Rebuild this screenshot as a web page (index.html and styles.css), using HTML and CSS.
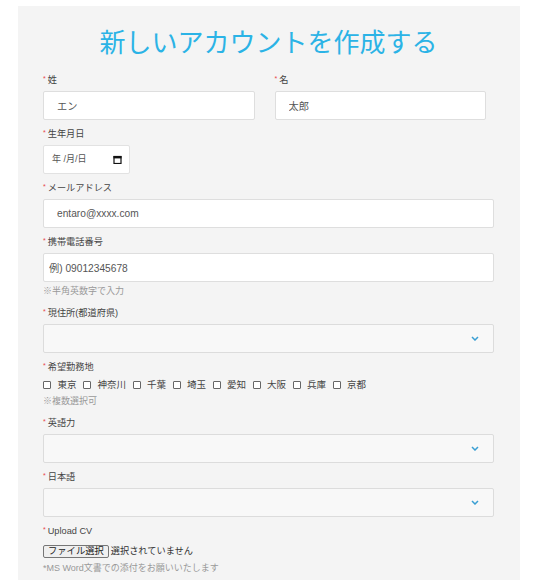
FILE: index.html
```html
<!DOCTYPE html>
<html lang="ja">
<head>
<meta charset="utf-8">
<title>新しいアカウントを作成する</title>
<link rel="stylesheet" href="styles.css">
</head>
<body>
<div class="panel">
  <h1 class="title">新しいアカウントを作成する</h1>

  <div class="name-row">
    <div class="field">
      <label class="label"><span class="req">*</span>姓</label>
      <input class="input" type="text" value="エン">
    </div>
    <div class="field">
      <label class="label"><span class="req">*</span>名</label>
      <input class="input" type="text" value="太郎">
    </div>
  </div>

  <div class="field">
    <label class="label"><span class="req">*</span>生年月日</label>
    <div class="date">
      <span class="date-text">年 /月/日</span>
      <svg class="cal" width="9" height="9" viewBox="0 0 9 9"><rect x="1" y="1.5" width="7" height="7" fill="none" stroke="#111" stroke-width="1.2"/><rect x="0.5" y="1" width="8" height="2.4" fill="#111"/></svg>
    </div>
  </div>

  <div class="field">
    <label class="label"><span class="req">*</span>メールアドレス</label>
    <input class="input" type="text" value="entaro@xxxx.com">
  </div>

  <div class="field field-noted">
    <label class="label"><span class="req">*</span>携帯電話番号</label>
    <input class="input input-tight" type="text" value="例) 09012345678">
    <div class="note note-phone">※半角英数字で入力</div>
  </div>

  <div class="field">
    <label class="label"><span class="req">*</span>現住所(都道府県)</label>
    <div class="select-wrap">
      <select class="select"><option></option></select>
      <svg class="chev" width="8" height="5" viewBox="0 0 8 5"><path d="M1 1 L4 4 L7 1" fill="none" stroke="#3a9fd3" stroke-width="1.5"/></svg>
    </div>
  </div>

  <div class="field field-noted">
    <label class="label"><span class="req">*</span>希望勤務地</label>
    <div class="checks">
      <label class="check"><input type="checkbox" class="box">東京</label>
      <label class="check"><input type="checkbox" class="box">神奈川</label>
      <label class="check"><input type="checkbox" class="box">千葉</label>
      <label class="check"><input type="checkbox" class="box">埼玉</label>
      <label class="check"><input type="checkbox" class="box">愛知</label>
      <label class="check"><input type="checkbox" class="box">大阪</label>
      <label class="check"><input type="checkbox" class="box">兵庫</label>
      <label class="check"><input type="checkbox" class="box">京都</label>
    </div>
    <div class="note note-check">※複数選択可</div>
  </div>

  <div class="field">
    <label class="label"><span class="req">*</span>英語力</label>
    <div class="select-wrap">
      <select class="select"><option></option></select>
      <svg class="chev" width="8" height="5" viewBox="0 0 8 5"><path d="M1 1 L4 4 L7 1" fill="none" stroke="#3a9fd3" stroke-width="1.5"/></svg>
    </div>
  </div>

  <div class="field">
    <label class="label"><span class="req">*</span>日本語</label>
    <div class="select-wrap">
      <select class="select"><option></option></select>
      <svg class="chev" width="8" height="5" viewBox="0 0 8 5"><path d="M1 1 L4 4 L7 1" fill="none" stroke="#3a9fd3" stroke-width="1.5"/></svg>
    </div>
  </div>

  <div class="field">
    <label class="label"><span class="req">*</span>Upload CV</label>
    <div class="file-row">
      <button class="file-btn" type="button">ファイル選択</button>
      <span class="file-status">選択されていません</span>
    </div>
    <div class="note note-file">*MS Word文書での添付をお願いいたします</div>
  </div>
</div>
</body>
</html>
```

FILE: styles.css
```css
html, body {
  margin: 0;
  padding: 0;
  background: #ffffff;
}

body {
  font-family: "Liberation Sans", "Noto Sans CJK JP", sans-serif;
  color: #444;
}

.panel {
  margin: 6px 0 0 18px;
  width: 502px;
  box-sizing: border-box;
  background: #f4f4f4;
  padding: 17px 26px 30px 25px;
}

.title {
  margin: 0 0 15px;
  height: 36px;
  font-family: "Noto Sans CJK JP", "Liberation Sans", sans-serif;
  font-weight: 400;
  font-size: 26px;
  line-height: 36px;
  text-align: center;
  color: #2bb3e6;
}

.name-row {
  display: grid;
  grid-template-columns: 1fr 1fr;
  column-gap: 20px;
  padding-right: 8px;
}

.field {
  display: flex;
  flex-direction: column;
  align-items: flex-start;
  margin-bottom: 8px;
}

.field-noted {
  margin-bottom: 9px;
}

.label {
  display: block;
  height: 13px;
  font-size: 9.2px;
  line-height: 13px;
  margin-bottom: 4px;
  color: #444;
  white-space: nowrap;
}

.req {
  position: relative;
  top: -2px;
  color: #e8454a;
  font-size: 7px;
  margin-right: 2px;
}

.input {
  display: block;
  width: 100%;
  height: 29px;
  flex: none;
  box-sizing: border-box;
  border: 1px solid #dedede;
  border-radius: 2px;
  background: #ffffff;
  padding: 0 13px;
  font-family: "Liberation Sans", "Noto Sans CJK JP", sans-serif;
  font-size: 10.2px;
  color: #555;
  outline: none;
  margin: 0;
}

.input-tight {
  padding: 0 5px;
}

.date {
  width: 87px;
  height: 29px;
  flex: none;
  box-sizing: border-box;
  border: 1px solid #e2e2e2;
  border-radius: 2px;
  background: #ffffff;
  display: flex;
  align-items: center;
  justify-content: space-between;
  padding: 0 7px 0 8px;
}

.date-text {
  font-size: 9px;
  line-height: 13px;
  color: #555;
}

.cal {
  display: block;
}

.note {
  height: 13px;
  font-size: 9px;
  line-height: 13px;
  color: #999;
  margin-top: 2px;
  white-space: nowrap;
}

.note-phone {
  margin-top: 3px;
}

.note-check {
  margin-top: 4px;
}

.note-file {
  margin-top: 3px;
}

.select-wrap {
  position: relative;
  width: 100%;
  height: 29px;
}

.select {
  display: block;
  width: 100%;
  height: 29px;
  box-sizing: border-box;
  border: 1px solid #dcdcdc;
  border-radius: 2px;
  background: #f8f8f8;
  appearance: none;
  -webkit-appearance: none;
  margin: 0;
  outline: none;
}

.chev {
  position: absolute;
  right: 15px;
  top: 12px;
}

.checks {
  display: flex;
  align-items: center;
  height: 13px;
  gap: 6.6px;
  font-size: 9.5px;
  line-height: 13px;
  color: #444;
}

.check {
  display: flex;
  align-items: center;
  height: 13px;
  gap: 6.4px;
}

.box {
  appearance: none;
  -webkit-appearance: none;
  width: 8px;
  height: 8px;
  margin: 0;
  box-sizing: border-box;
  border: 1px solid #666;
  border-radius: 1px;
  background: #fff;
}

.file-row {
  display: flex;
  align-items: center;
  margin-top: 2px;
  height: 15px;
}

.file-btn {
  height: 13px;
  box-sizing: border-box;
  padding: 0 4px;
  margin: 0 2px 0 0;
  border: 1px solid #767676;
  border-radius: 2px;
  background: #efefef;
  font-family: "Liberation Sans", "Noto Sans CJK JP", sans-serif;
  font-size: 9.3px;
  line-height: 11px;
  color: #222;
}

.file-status {
  font-size: 9.2px;
  line-height: 13px;
  color: #333;
}
```
